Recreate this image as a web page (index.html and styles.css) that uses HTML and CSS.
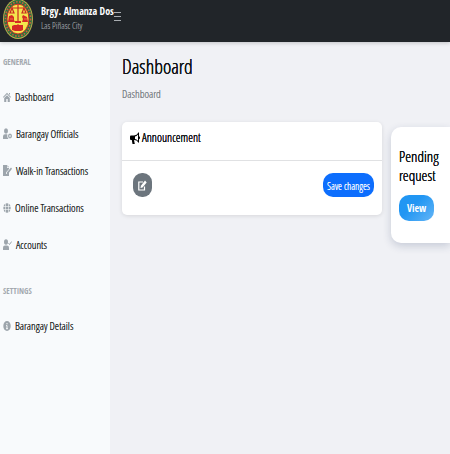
FILE: index.html
```html
<!DOCTYPE html>
<html lang="en">
<head>
<meta charset="utf-8">
<meta name="viewport" content="width=device-width, initial-scale=1">
<title>Dashboard</title>
<link rel="stylesheet" href="styles.css">
</head>
<body>
<header class="topbar">
  <svg class="seal" viewBox="0 0 30 40" preserveAspectRatio="none" aria-hidden="true">
    <ellipse cx="15" cy="20" rx="15" ry="20" fill="#b7a94c"/>
    <ellipse cx="15" cy="20" rx="14" ry="19" fill="#26733f"/>
    <ellipse cx="15" cy="20" rx="12.6" ry="17.2" fill="none" stroke="#d8573a" stroke-width="1.6" stroke-dasharray="1.6 1.5"/>
    <ellipse cx="15" cy="20" rx="11" ry="15" fill="#f4e64d" stroke="#d52b25"/>
    <path d="M15 5v17M9 9h12M9 9l-2 5h4zM21 9l-2 5h4z" fill="none" stroke="#c92b22" stroke-width="1.200"/>
    <path d="M6 17l3-1 2 2v3l1 2H5zM20 16l4 2 1 5h-6l1-3-1-2zM12 22h6v2h-6zM11 26h3l1-1 1 1h4v5l-2 1h-6l-3-1v-4z" fill="#d52b25"/>
    <path d="M7 20h3M21 20h3" stroke="#f4a04d" stroke-width=".7"/>
  </svg>
  <div class="brand">
    <strong class="brand-name">Brgy. Almanza Dos</strong>
    <span class="brand-place">Las Piñasc City</span>
  </div>
  <button class="menu" type="button" aria-label="Toggle menu">
    <svg viewBox="0 0 7 9" aria-hidden="true"><path d="M0 .5h7M0 4.500h7M0 8.500h7" stroke="#a9adb1"/></svg>
  </button>
</header>
<div class="shell">
  <nav class="sidebar">
    <h2 class="group">General</h2>
    <a class="item" href="#"><svg viewBox="0 0 8 10" aria-hidden="true"><path d="M0 5 4 .8 8 5l-.5.8L4 2.300.5 5.800z"/><path d="M6 1h1v2L6 2zM1.200 6 4 3.300 6.800 6v4H4.700V7H3.300v3H1.200z"/></svg>Dashboard</a>
    <a class="item" href="#"><svg class="wide" viewBox="0 0 9 11" aria-hidden="true"><ellipse cx="3" cy="3" rx="2" ry="2.700"/><path d="M0 11V8.500Q0 6.300 2 6.300h2.300V9L5.500 11z"/><path fill-rule="evenodd" d="M7 5l.5 1 1 .3.5 1.700-.5 1.700-1 .3-.5 1-.5-1-1-.3L5 8l.5-1.700 1-.3zM7 7a.7 1 0 1 0 .01 0z"/></svg>Barangay Officials</a>
    <a class="item" href="#"><svg class="wide" viewBox="0 0 9 11" aria-hidden="true"><path d="M0 0h4v3h2v1L3 7.500V9h1.500L6 7v4H0z"/><path d="M4.500 0 6 2.300H4.500zM8 2.500l1 1.200L5 9H3.800V7.500z"/></svg>Walk-in Transactions</a>
    <a class="item" href="#"><svg viewBox="0 0 8 10" aria-hidden="true"><ellipse cx="4" cy="5" rx="3.700" ry="4.800"/><path d="M0 3.500h8M0 6.500h8M2.500 0v10M5.500 0v10" stroke="#f8fafc" stroke-width=".6"/></svg>Online Transactions</a>
    <a class="item" href="#"><svg class="wide" viewBox="0 0 9 11" aria-hidden="true"><ellipse cx="3" cy="3" rx="2" ry="2.800"/><path d="M0 11V8.800Q0 6.500 2 6.500h2Q6 6.500 6 8.800V11z"/><path d="m5.500 4.200 1 1.300L8.700 2.500" fill="none" stroke="#9da5ac"/></svg>Accounts</a>
    <h2 class="group">Settings</h2>
    <a class="item" href="#"><svg viewBox="0 0 8 10" aria-hidden="true"><ellipse cx="4" cy="5" rx="3.700" ry="5"/><path d="M4 2v1.300M3.200 4.500H4V7.500M3 7.700h2" fill="none" stroke="#f8fafc"/></svg>Barangay Details</a>
  </nav>
  <main class="content">
    <h1 class="title">Dashboard</h1>
    <p class="crumb">Dashboard</p>
    <div class="panels">
      <section class="card">
        <h2 class="card-head"><svg viewBox="0 0 10 12" aria-hidden="true"><path fill-rule="evenodd" d="M9 0v4.300q1 .3 1 1.500T9 7.300V11L6.500 8.500 4 8l.8 4H2.500L1.800 8H.5L0 7V4.500L.5 3.500H4L6.500 2.800zM8 2.500 6.500 4 5 4.500V7l1.500.4L8 8.800z"/></svg>Announcement</h2>
        <div class="card-body">
          <button class="edit" type="button" aria-label="Edit announcement"><svg viewBox="0 0 9 11" aria-hidden="true"><path d="M5 2H.8v8h5.700V6.500" fill="none" stroke="#fff" stroke-width="1.200"/><path d="M7 .5 8.700 2.500 4.500 7.500l-2 .6.4-2.400z" fill="#fff"/></svg></button>
          <button class="save" type="button">Save changes</button>
        </div>
      </section>
      <section class="pending">
        <h2 class="pending-title">Pending request</h2>
        <button class="view" type="button">View</button>
      </section>
    </div>
  </main>
</div>
</body>
</html>
```
FILE: styles.css
```css
* { box-sizing: border-box; }
body {
  margin: 0;
  min-height: 100vh;
  display: flex;
  flex-direction: column;
  overflow-x: hidden;
  background: #f0f1f5;
  color: #1b1f23;
  font: 11px/16px "Open Sans Condensed Light", "Roboto Condensed", sans-serif;
  text-shadow: 0 0 0 currentColor;
}
h1, h2, p { margin: 0; font-weight: 300; }
button { border: 0; padding: 0; font: inherit; color: #fff; text-shadow: inherit; }
.topbar {
  height: 42px;
  display: flex;
  align-items: flex-start;
  padding-left: 3px;
  background: #212529;
  box-shadow: 0 1px 4px #0003;
  position: relative;
}
.seal { width: 30px; height: 40px; margin-top: -1px; flex: none; }
.brand { display: flex; flex-direction: column; margin: 3px 0 0 8px; white-space: nowrap; }
.brand-name { color: #fff; font-family: "Open Sans Condensed", sans-serif; font-size: 10px; text-shadow: none; }
.brand-place { color: #888d92; font-size: 9px; line-height: 14px; }
.menu { display: flex; background: none; margin-top: 12px; }
.menu svg { width: 7px; height: 9px; }
.shell { flex: 1; display: flex; }
.sidebar {
  flex: 0 0 110px;
  min-width: 0;
  padding: 12px 0 0 3px;
  background: #f8fafc;
}
.group {
  color: #a3a9af;
  font-family: "Open Sans Condensed", sans-serif;
  font-size: 8px;
  font-weight: 700;
  line-height: 16px;
  text-shadow: none;
  text-transform: uppercase;
}
.item {
  display: flex;
  align-items: center;
  gap: 4px;
  height: 21px;
  margin: 16px 0;
  color: inherit;
  text-decoration: none;
  white-space: nowrap;
}
.item svg { width: 8px; height: 10px; fill: #9da5ac; flex: none; }
.item .wide { width: 9px; height: 11px; }
.item + .group { margin-top: 28px; }
.content { flex: 1; min-width: 0; padding: 12px 0 0 12px; }
.title, .pending-title, .card-head { color: #111417; text-shadow: 0 0 0 currentColor, 0 0 0 currentColor; }
.title { font-size: 20px; line-height: 26px; }
.crumb { margin-top: 6px; color: #777d83; }
.panels { display: flex; align-items: flex-start; gap: 9px; margin-top: 20px; }
.card { flex: 0 0 260px; border-radius: 5px; background: #fff; box-shadow: 0 1px 4px #0000001c; }
.card-head {
  display: flex;
  align-items: center;
  gap: 2px;
  height: 39px;
  padding: 0 8px 6px;
  border-bottom: 1px solid #e0e1e3;
  font-size: 12px;
}
.card-head svg { width: 10px; height: 12px; }
.card-body { display: flex; justify-content: space-between; padding: 12px 8px 18px 11px; }
.edit { display: grid; place-items: center; width: 19px; height: 24px; border-radius: 9px; background: #6c757d; }
.edit svg { width: 9px; height: 11px; }
.save { height: 24px; padding: 2px 4px 0; border-radius: 10px; background: #0d6efd; font-size: 10px; }
.pending {
  flex: 1;
  min-height: 116px;
  margin-top: 5px;
  padding: 20px 8px 22px;
  border-radius: 10px 0 0 10px;
  background: #fff;
  box-shadow: 0 3px 8px #20306033;
}
.pending-title { font-size: 15px; line-height: 19px; }
.view {
  height: 26px;
  margin-top: 10px;
  padding: 0 8px;
  border-radius: 10px;
  background: linear-gradient(135deg, #2196f3 40%, #64b5f6);
  font-family: "Open Sans Condensed", sans-serif;
  font-size: 10px;
  text-shadow: none;
  font-weight: 700;
}
```
